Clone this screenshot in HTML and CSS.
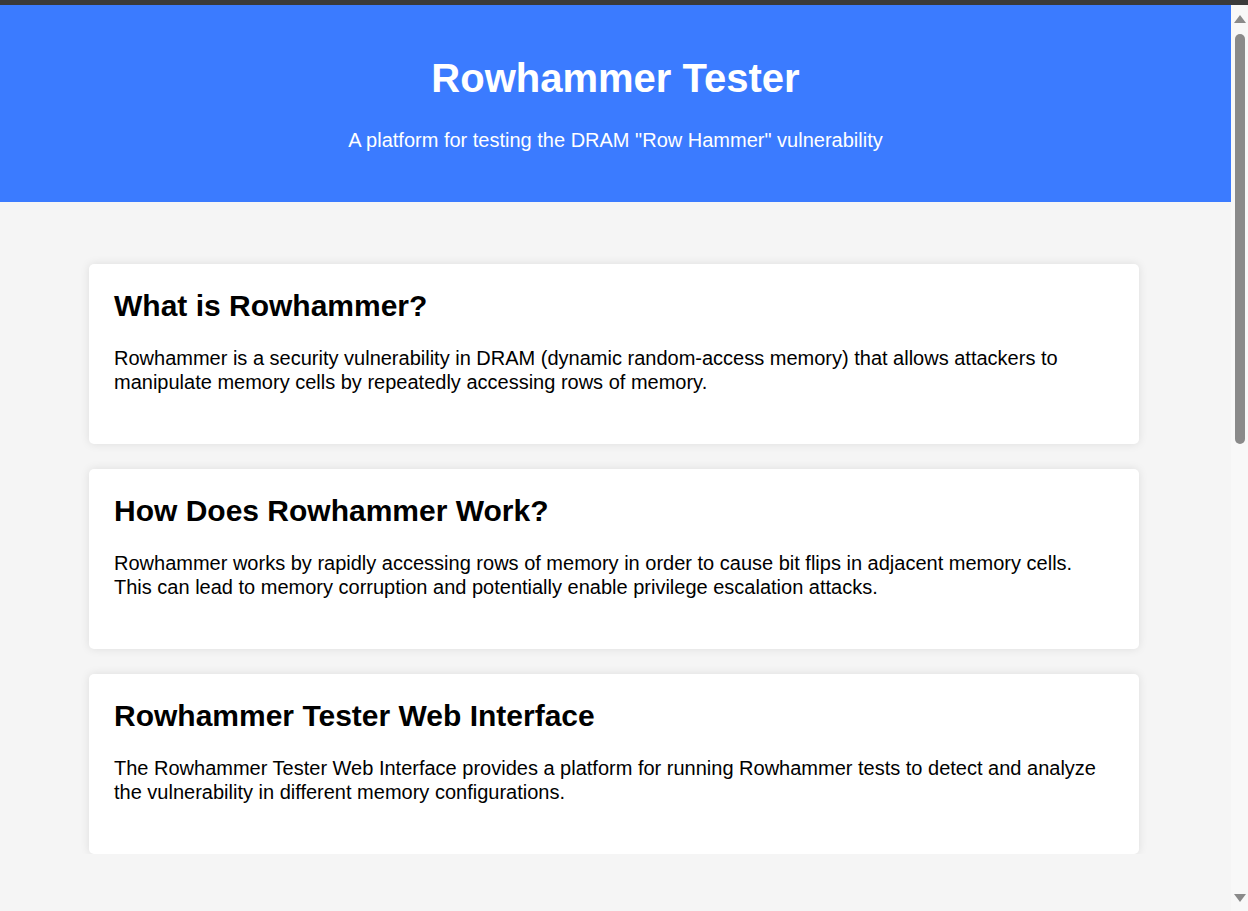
FILE: index.html
```html
<!DOCTYPE html>
<html lang="en">
<head>
<meta charset="utf-8">
<title>Rowhammer Tester</title>
<link rel="stylesheet" href="styles.css">
</head>
<body>
<div class="chrome-strip"></div>
<div class="page">
  <header class="site-header">
    <h1 class="site-title">Rowhammer Tester</h1>
    <p class="site-subtitle">A platform for testing the DRAM "Row Hammer" vulnerability</p>
  </header>
  <main class="content">
    <section class="card">
      <h2 class="card-title">What is Rowhammer?</h2>
      <p class="card-text">Rowhammer is a security vulnerability in DRAM (dynamic random-access memory) that allows attackers to manipulate memory cells by repeatedly accessing rows of memory.</p>
    </section>
    <section class="card">
      <h2 class="card-title">How Does Rowhammer Work?</h2>
      <p class="card-text">Rowhammer works by rapidly accessing rows of memory in order to cause bit flips in adjacent memory cells. This can lead to memory corruption and potentially enable privilege escalation attacks.</p>
    </section>
    <section class="card">
      <h2 class="card-title">Rowhammer Tester Web Interface</h2>
      <p class="card-text">The Rowhammer Tester Web Interface provides a platform for running Rowhammer tests to detect and analyze the vulnerability in different memory configurations.</p>
    </section>
  </main>
</div>
<div class="scrollbar" aria-hidden="true">
  <span class="scroll-arrow scroll-arrow-up"></span>
  <span class="scroll-thumb"></span>
  <span class="scroll-arrow scroll-arrow-down"></span>
</div>
</body>
</html>
```
FILE: styles.css
```css
html {
  background: #f5f5f5;
}

body {
  margin: 0;
  background: #f5f5f5;
  font-family: "Liberation Sans", Arial, sans-serif;
  color: #000;
  overflow: hidden;
}

.chrome-strip {
  height: 5px;
  background: #3a3a3a;
}

.page {
  margin-right: 17px;
}

.site-header {
  background: #3b7bff;
  color: #fff;
  text-align: center;
  padding: 51px 20px 50px;
}

.site-title {
  margin: 0 0 28px;
  font-size: 40px;
  font-weight: bold;
}

.site-subtitle {
  margin: 0;
  font-size: 20px;
}

.content {
  width: 1050px;
  margin: 62px auto 0;
  display: flex;
  flex-direction: column;
  gap: 25px;
  position: relative;
  left: -1.5px;
}

.card {
  background: #fff;
  border-radius: 5px;
  box-shadow: 0 0 10px rgba(0, 0, 0, 0.1);
  padding: 25px 25px 26px;
}

.card-title {
  margin: 0 0 23px;
  font-size: 30px;
  font-weight: bold;
}

.card-text {
  margin: 0 0 24px;
  font-size: 20px;
  line-height: 24px;
}

/* faux browser scrollbar overlaying the right edge */
.scrollbar {
  position: fixed;
  top: 5px;
  right: 0;
  bottom: 0;
  width: 17px;
  background: #f8f8f8;
  border-top-right-radius: 6px;
}

.scroll-thumb {
  position: absolute;
  left: 4px;
  top: 29px;
  width: 10px;
  height: 410px;
  border-radius: 5px;
  background: #8a8a8a;
}

.scroll-arrow {
  position: absolute;
  left: 3px;
  width: 0;
  height: 0;
  border-left: 6px solid transparent;
  border-right: 6px solid transparent;
}

.scroll-arrow-up {
  top: 10px;
  border-bottom: 8px solid #8a8a8a;
}

.scroll-arrow-down {
  bottom: 9px;
  border-top: 8px solid #8a8a8a;
}
```
